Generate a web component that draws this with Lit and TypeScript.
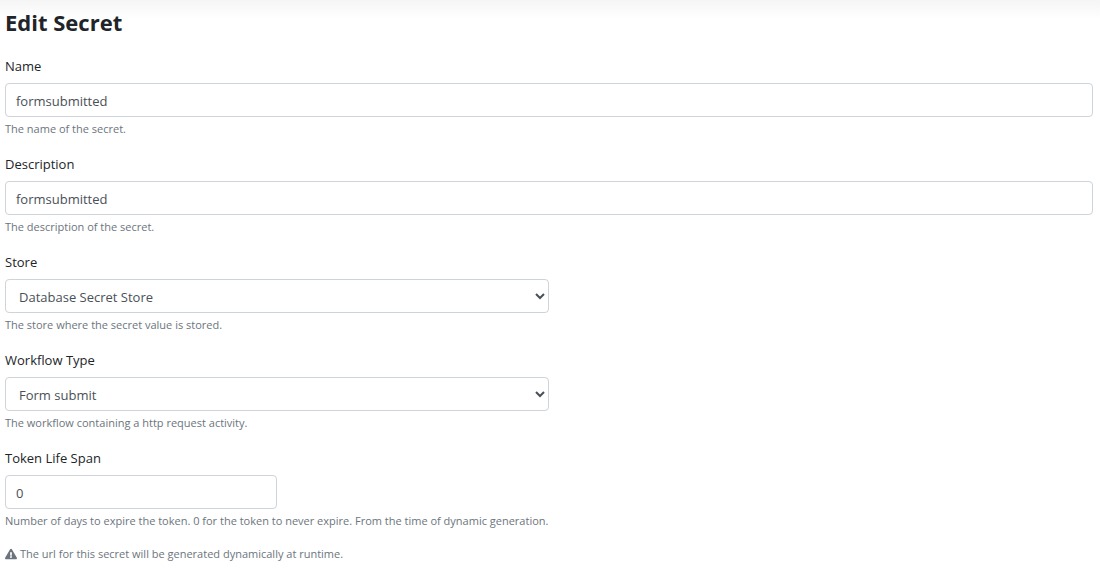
import { LitElement, html, css } from "lit";
import { customElement, state } from "lit/decorators.js";

@customElement("app-root")
export class AppRoot extends LitElement {
  static styles = css`
    :host {
      display: block;
      font-family: "Segoe UI", "Open Sans", "Noto Sans", sans-serif;
      font-size: 13px;
      color: #212529;
    }
    .page {
      padding: 7px 7px 8px 5px;
      background: linear-gradient(#f5f5f5, #fff 20px);
    }
    .title {
      margin: 0 0 19px;
      font-size: 22px;
      line-height: 30px;
      font-weight: 700;
    }
    .form {
      display: flex;
      flex-direction: column;
      gap: 17px;
    }
    .field {
      display: flex;
      flex-direction: column;
    }
    .half {
      width: 50%;
    }
    .quarter {
      width: 25%;
    }
    .label {
      line-height: 20px;
      margin-bottom: 7px;
    }
    .control {
      box-sizing: border-box;
      width: 100%;
      height: 34px;
      margin: 0 0 4px;
      padding: 2px 10px 0;
      border: 1px solid #ced4da;
      border-radius: 4px;
      background: #fff;
      color: #495057;
      font: inherit;
    }
    select.control {
      padding: 2px 0 0 9px;
    }
    .control:focus {
      outline: none;
      border-color: #80bdff;
    }
    .hint {
      margin: 0;
      font-size: 11px;
      line-height: 16px;
      color: #6c757d;
      white-space: nowrap;
    }
    .notice {
      display: flex;
      align-items: center;
      gap: 3px;
    }
    .icon {
      width: 12px;
      height: 12px;
      fill: currentColor;
    }
  `;

  @state() private name = "formsubmitted";
  @state() private description = "formsubmitted";
  @state() private lifeSpan = "0";

  render() {
    return html`
      <main class="page">
        <h1 class="title">Edit Secret</h1>
        <form class="form" @submit=${(e: Event) => e.preventDefault()}>
          <div class="field">
            <label class="label" for="name">Name</label>
            <input class="control" id="name" type="text" aria-describedby="name-hint" .value=${this.name} />
            <p class="hint" id="name-hint">The name of the secret.</p>
          </div>
          <div class="field">
            <label class="label" for="description">Description</label>
            <input class="control" id="description" type="text" aria-describedby="description-hint" .value=${this.description} />
            <p class="hint" id="description-hint">The description of the secret.</p>
          </div>
          <div class="field half">
            <label class="label" for="store">Store</label>
            <select class="control" id="store" aria-describedby="store-hint">
              <option>Database Secret Store</option>
            </select>
            <p class="hint" id="store-hint">The store where the secret value is stored.</p>
          </div>
          <div class="field half">
            <label class="label" for="workflow">Workflow Type</label>
            <select class="control" id="workflow" aria-describedby="workflow-hint">
              <option>Form submit</option>
            </select>
            <p class="hint" id="workflow-hint">The workflow containing a http request activity.</p>
          </div>
          <div class="field quarter">
            <label class="label" for="span">Token Life Span</label>
            <input class="control" id="span" type="text" inputmode="numeric" aria-describedby="span-hint" .value=${this.lifeSpan} />
            <p class="hint" id="span-hint">
              Number of days to expire the token. 0 for the token to never expire. From the time of dynamic generation.
            </p>
          </div>
          <p class="hint notice">
            <svg class="icon" viewBox="0 0 576 512" aria-hidden="true">
              <path
                d="M569.5 440C588 472 564.800 512 527.900 512H48.100C11.100 512-12 471.900 6.500 440L246.400 24C264.900-8 311.100-8 329.600 24L569.500 440ZM288 354a46 46 0 1 0 0 92 46 46 0 0 0 0-92Zm-43.700-165.300 7.400 136c.4 6.400 5.600 11.300 12 11.300h48.500c6.400 0 11.600-5 12-11.300l7.400-136c.4-6.900-5.100-12.700-12-12.700h-63.400c-6.900 0-12.300 5.800-11.900 12.700Z"
              />
            </svg>
            <span>The url for this secret will be generated dynamically at runtime.</span>
          </p>
        </form>
      </main>
    `;
  }
}
